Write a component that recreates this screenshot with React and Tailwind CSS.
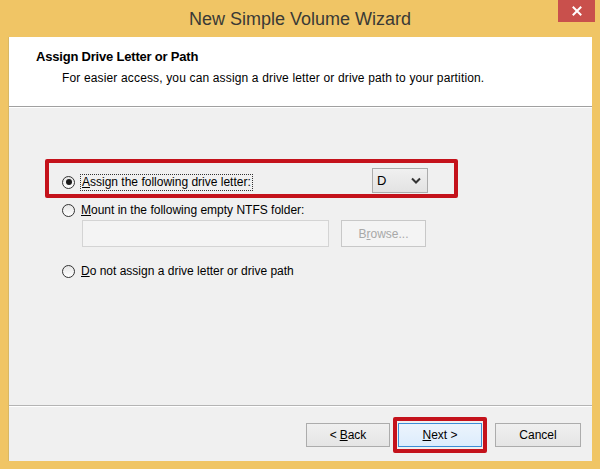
import React from 'react';

const font = { fontFamily: '"Liberation Sans", Arial, sans-serif' };

function Radio({ checked }) {
  return (
    <span className="w-[13px] h-[13px] rounded-full border border-[#333] bg-gradient-to-b from-[#e6e6e6] to-white flex items-center justify-center shrink-0">
      {checked && <span className="w-[6px] h-[6px] rounded-full bg-[#1a1a1a]" />}
    </span>
  );
}

function WinButton({ children, focused, disabled, className = '' }) {
  return (
    <button
      className={`h-[24px] text-[12px] border flex items-center justify-center ${
        focused
          ? 'border-[#3c8ed6] bg-gradient-to-b from-[#ecf4fc] to-[#dcecfc] text-black'
          : disabled
          ? 'border-[#c8c8c8] bg-[#f4f4f4] text-[#a8a8a8]'
          : 'border-[#acacac] bg-gradient-to-b from-[#f0f0f0] to-[#e5e5e5] text-black'
      } ${className}`}
    >
      {children}
    </button>
  );
}

export default function App() {
  return (
    <div className="w-[600px] h-[469px] bg-[#f0c565] flex flex-col overflow-hidden" style={font}>
      {/* title bar */}
      <div className="h-[37px] shrink-0 relative flex items-center justify-center">
        <span className="text-[18px] text-[#3a3a36] mt-[1px]">New Simple Volume Wizard</span>
        <div className="absolute right-[5px] top-0 w-[37px] h-[22px] bg-[#c9504c] flex items-center justify-center">
          <svg width="10" height="10" viewBox="0 0 10 10">
            <path d="M1.5 1.5 L8.5 8.5 M8.5 1.5 L1.5 8.5" stroke="white" strokeWidth="2" strokeLinecap="square" />
          </svg>
        </div>
      </div>

      {/* client area */}
      <div className="mx-[8px] mb-[8px] flex-1 flex flex-col bg-[#f0f0f0] border-l border-[#d8b865]">
        {/* header */}
        <div className="h-[70px] shrink-0 bg-white border-b border-[#a0a0a0] pl-[27px] pt-[10px]">
          <div className="text-[13px] font-bold text-black tracking-[-0.2px]">Assign Drive Letter or Path</div>
          <div className="text-[12px] text-black pl-[26px] mt-[2px] tracking-[0.15px]">
            For easier access, you can assign a drive letter or drive path to your partition.
          </div>
        </div>

        {/* body */}
        <div className="flex-1 border-t border-white border-b border-b-[#b4b4b4] pl-[53px] pt-[64px] text-[12px] text-black">
          <div className="relative flex items-center h-[20px] w-[366px]">
            <div className="absolute -left-[17px] -top-[13px] w-[413px] h-[39px] border-[4px] border-[#c4121b] rounded-[2px]" />
            <Radio checked />
            <span className="ml-[5px] border border-dotted border-[#333] px-[1px] leading-[15px]">
              <span className="underline">A</span>ssign the following drive letter:
            </span>
            <div className="ml-auto -mt-[3px] w-[56px] h-[25px] border border-[#acacac] bg-gradient-to-b from-[#f0f0f0] to-[#e3e3e3] flex items-center justify-between px-[4px] shrink-0">
              <span className="text-[13px]">D</span>
              <svg width="10" height="7" viewBox="0 0 10 7" className="mr-[2px]">
                <path d="M1 1.5 L5 5.5 L9 1.5" fill="none" stroke="#333" strokeWidth="2" />
              </svg>
            </div>
          </div>

          <div className="flex items-center h-[16px] mt-[10px]">
            <Radio />
            <span className="ml-[6px]">
              <span className="underline">M</span>ount in the following empty NTFS folder:
            </span>
          </div>
          <div className="flex items-center gap-[12px] ml-[20px] mt-[2px]">
            <div className="w-[247px] h-[27px] bg-[#f4f4f4] border border-[#d4d4d4]" />
            <WinButton disabled className="w-[85px] h-[27px]">
              B<span className="underline">r</span>owse...
            </WinButton>
          </div>

          <div className="flex items-center h-[16px] mt-[16px]">
            <Radio />
            <span className="ml-[6px]">
              <span className="underline">D</span>o not assign a drive letter or drive path
            </span>
          </div>
        </div>

        {/* footer */}
        <div className="h-[55px] shrink-0 border-t border-white flex justify-end items-start pt-[16px] pr-[11px]">
          <WinButton className="w-[84px]">
            &lt; <span className="underline ml-[3px]">B</span>ack
          </WinButton>
          <div className="relative ml-[8px]">
            <div className="absolute -left-[5px] -top-[6px] w-[94px] h-[36px] border-[4px] border-[#c4121b] rounded-[2px]" />
            <WinButton focused className="w-[84px]">
              <span className="underline">N</span>ext &gt;
            </WinButton>
          </div>
          <WinButton className="w-[86px] ml-[13px]">Cancel</WinButton>
        </div>
      </div>
    </div>
  );
}
